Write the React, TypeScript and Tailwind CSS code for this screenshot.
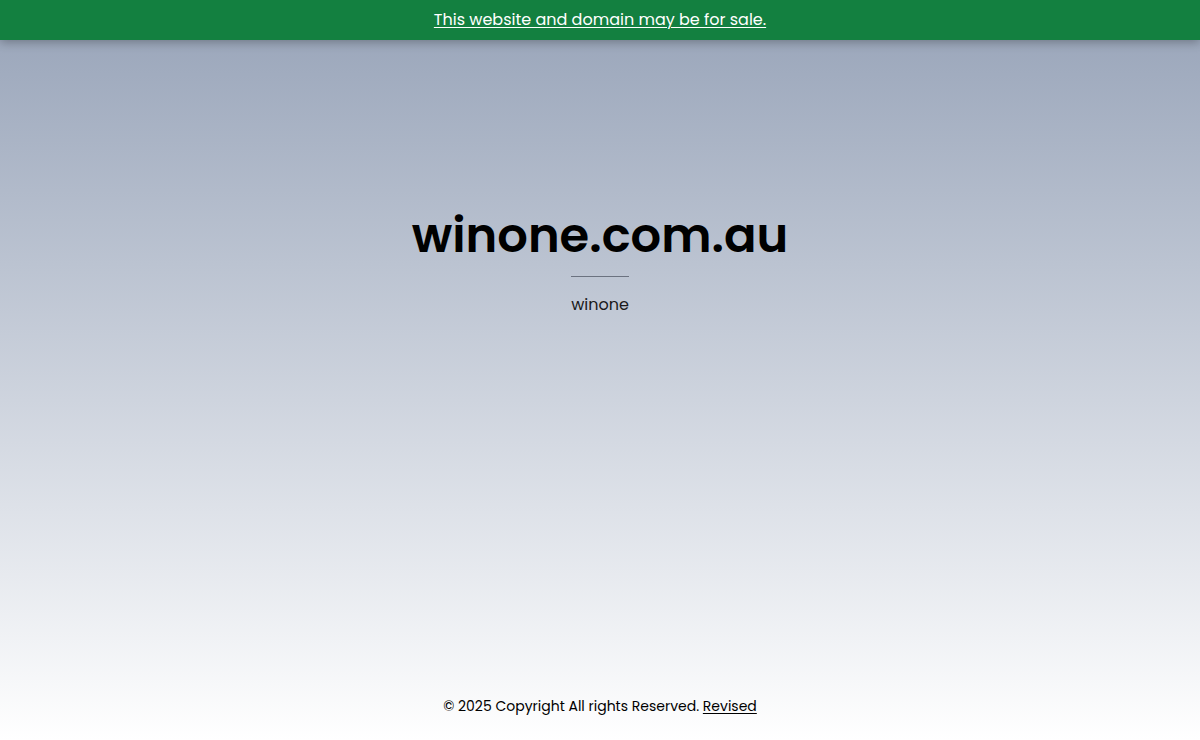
export default function App() {
  return (
    <div
      className="flex h-[740px] w-full flex-col bg-gradient-to-b from-[#97a3b8] to-[#ffffff] text-black"
      style={{ fontFamily: 'Poppins, Inter, "Noto Sans", sans-serif' }}
    >
      <div className="relative z-10 flex h-10 shrink-0 items-center justify-center bg-[#138040] shadow-[0_2px_10px_rgba(0,0,0,0.3)]">
        <a href="#" className="text-[16px] font-normal text-white underline underline-offset-2">
          This website and domain may be for sale.
        </a>
      </div>

      <main className="flex flex-1 flex-col items-center pt-[166px]">
        <h1 className="text-[48px] font-semibold leading-[60px]">winone.com.au</h1>
        <div className="mt-[10px] h-px w-[58px] bg-[#6b7280]" />
        <p className="mt-[16px] text-[16px] text-[#1a1a1a]">winone</p>
      </main>

      <footer className="pb-[24px] text-center text-[14px] leading-5">
        © 2025 Copyright All rights Reserved.{' '}
        <a href="#" className="underline underline-offset-2">
          Revised
        </a>
      </footer>
    </div>
  )
}
